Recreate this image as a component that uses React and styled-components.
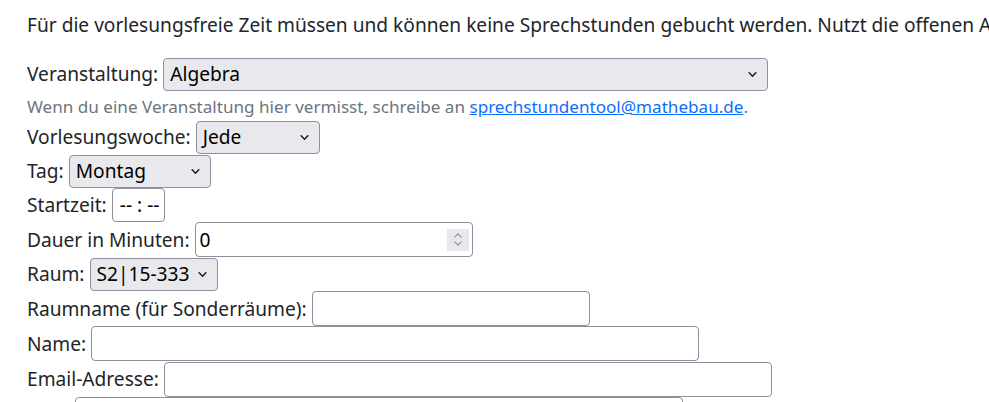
import styled, { createGlobalStyle } from "styled-components";

const GlobalStyle = createGlobalStyle`
  html, body {
    margin: 0;
    overflow: hidden;
    background: #fff;
  }
  body {
    font-family: "Noto Sans", "Open Sans", sans-serif;
    font-size: 19.15px;
    color: #212529;
  }
`;

const Page = styled.div`
  padding: 11px 0 0 27px;
`;

const Notice = styled.p`
  margin: 0 0 18px;
  line-height: 28px;
  white-space: nowrap;
`;

const Row = styled.div`
  display: flex;
  align-items: center;
  gap: 5px;
  height: ${(p) => p.$h || 34}px;
`;

const Label = styled.label`
  line-height: 28px;
  white-space: nowrap;
`;

const SelectBox = styled.div`
  box-sizing: border-box;
  width: ${(p) => p.$w}px;
  height: 33px;
  display: flex;
  align-items: center;
  justify-content: space-between;
  padding: 0 10px 0 6px;
  background: #e9e9ed;
  border: 1px solid #8f8f9d;
  border-radius: 4px;
  color: #000;
  white-space: nowrap;
`;

const TextBox = styled.div`
  box-sizing: border-box;
  width: ${(p) => p.$w}px;
  height: ${(p) => p.$h || 35}px;
  display: flex;
  align-items: center;
  justify-content: space-between;
  padding: 0 3px 0 ${(p) => p.$pl || 4}px;
  background: #fff;
  border: 1px solid #8f8f9d;
  border-radius: 4px;
  color: #000;
  white-space: nowrap;
`;

const Spinner = styled.span`
  width: 22px;
  height: 22px;
  background: #e9e9ed;
  display: flex;
  flex-direction: column;
  align-items: center;
  justify-content: center;
  gap: 3px;
`;

const Hint = styled.div`
  margin-top: 4px;
  font-size: 17.1px;
  line-height: 24px;
  height: 25px;
  color: #6c757d;
  white-space: nowrap;
`;

const MailLink = styled.a`
  color: #0d6efd;
  text-decoration: underline;
`;

const Chevron = ({ up, color = "#1b1b1b", w = 9, h = 5, sw = 1.8 }) => (
  <svg width={w} height={h} viewBox="0 0 10 6" fill="none">
    <path
      d={up ? "M1 5L5 1L9 5" : "M1 1L5 5L9 1"}
      stroke={color}
      strokeWidth={sw}
      strokeLinecap="round"
      strokeLinejoin="round"
    />
  </svg>
);

const Select = ({ w, children }) => (
  <SelectBox $w={w}>
    <span>{children}</span>
    <Chevron />
  </SelectBox>
);

export default function App() {
  return (
    <>
      <GlobalStyle />
      <Page>
        <Notice>
          Für die vorlesungsfreie Zeit müssen und können keine Sprechstunden gebucht werden. Nutzt die offenen Angebote.
        </Notice>
        <Row>
          <Label>Veranstaltung:</Label>
          <Select w={605}>Algebra</Select>
        </Row>
        <Hint>
          Wenn du eine Veranstaltung hier vermisst, schreibe an{" "}
          <MailLink href="#">sprechstundentool@mathebau.de</MailLink>.
        </Hint>
        <Row>
          <Label>Vorlesungswoche:</Label>
          <Select w={124}>Jede</Select>
        </Row>
        <Row>
          <Label>Tag:</Label>
          <Select w={142}>Montag</Select>
        </Row>
        <Row>
          <Label>Startzeit:</Label>
          <TextBox $w={53} $h={34} $pl={7}>-- : --</TextBox>
        </Row>
        <Row $h={35}>
          <Label>Dauer in Minuten:</Label>
          <TextBox $w={278}>
            <span>0</span>
            <Spinner>
              <Chevron up color="#8f8f9d" w={8} h={5} sw={1.4} />
              <Chevron color="#8f8f9d" w={8} h={5} sw={1.4} />
            </Spinner>
          </TextBox>
        </Row>
        <Row>
          <Label>Raum:</Label>
          <Select w={128}>S2|15-333</Select>
        </Row>
        <Row $h={35}>
          <Label>Raumname (für Sonderräume):</Label>
          <TextBox $w={278} />
        </Row>
        <Row $h={35}>
          <Label>Name:</Label>
          <TextBox $w={608} />
        </Row>
        <Row $h={36}>
          <Label>Email-Adresse:</Label>
          <TextBox $w={608} />
        </Row>
        <Row $h={35}>
          <Label>Titel:</Label>
          <TextBox $w={608} />
        </Row>
      </Page>
    </>
  );
}
